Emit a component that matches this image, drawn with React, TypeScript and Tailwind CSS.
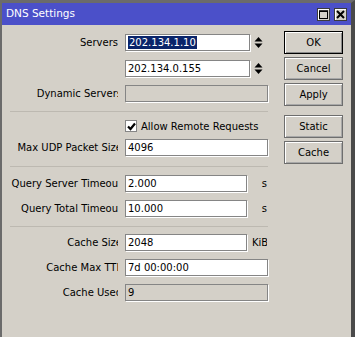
import React from "react";

function Label({ text, clip = true }: { text: string; clip?: boolean }) {
  return (
    <div className="w-[108px] shrink-0 overflow-hidden h-[17px] flex items-center">
      <div className={`${clip ? "w-[112px]" : "w-[108px]"} shrink-0 text-right whitespace-nowrap`}>
        {text}
      </div>
    </div>
  );
}

function Box({
  children,
  className = "",
  disabled = false,
}: {
  children?: React.ReactNode;
  className?: string;
  disabled?: boolean;
}) {
  return (
    <div
      className={`h-[17px] border border-[#858585] shadow-[1px_1px_0_#ffffff] flex items-center pl-[2px] whitespace-nowrap overflow-hidden ${
        disabled ? "bg-[#d4d0c8]" : "bg-white"
      } ${className}`}
    >
      {children}
    </div>
  );
}

function Spinner() {
  return (
    <svg width="9" height="13" viewBox="0 0 9 13" className="ml-[4px] shrink-0">
      <path d="M4.5 1 L8.5 5.5 L0.5 5.5 Z" fill="#000" />
      <path d="M0.5 7.5 L8.5 7.5 L4.5 12 Z" fill="#000" />
    </svg>
  );
}

function Unit({ text }: { text: string }) {
  return (
    <div className="w-[15px] ml-[5px] overflow-hidden shrink-0">
      <div className="w-[15px] text-right whitespace-nowrap">{text}</div>
    </div>
  );
}

function Row({ label, className = "", clip = true, children }: { label: string; className?: string; clip?: boolean; children: React.ReactNode }) {
  return (
    <div className={`flex items-center h-[17px] gap-[7px] ${className}`}>
      {label ? <Label text={label} clip={clip} /> : <div className="w-[108px] shrink-0" />}
      <div className="flex items-center w-[143px]">{children}</div>
    </div>
  );
}

function Sep({ className = "" }: { className?: string }) {
  return <div className={`h-px w-[258px] bg-[#bdb9b1] ${className}`} />;
}

function Btn({ text, def = false, className = "" }: { text: string; def?: boolean; className?: string }) {
  return (
    <div
      className={`w-[59px] h-[23px] flex items-center justify-center border ${
        def ? "border-black shadow-[inset_1px_1px_0_#ffffff,inset_-1px_-1px_0_#8a8a8a]" : "border-[#6e6e6e] shadow-[inset_1px_1px_0_#ffffff,inset_-1px_-1px_0_#a8a8a8]"
      } ${className}`}
    >
      {text}
    </div>
  );
}

function TitleBtn({ children }: { children: React.ReactNode }) {
  return (
    <div className="w-[13px] h-[13px] bg-[#d4d0c8] border border-[#3c3c3c] shadow-[inset_1px_1px_0_#ffffff] flex items-center justify-center">
      {children}
    </div>
  );
}

export default function App() {
  return (
    <div className="w-[355px] h-[337px] flex flex-col border-l-2 border-t-[3px] border-r-4 border-l-[#6b6b6b] border-t-[#6b6b6b] border-r-[#4a4a4a] font-['DejaVu_Sans',sans-serif] text-[10px] text-black overflow-hidden">
      <div className="h-[22px] shrink-0 bg-[#4b50c9] flex items-center pl-[4px] pr-[4px]">
        <span className="text-white text-[10.5px] flex-1">DNS Settings</span>
        <div className="flex gap-[4px] mt-[1px]">
          <TitleBtn>
            <svg width="9" height="9" viewBox="0 0 9 9">
              <rect x="0.5" y="1" width="8" height="7.5" fill="none" stroke="#000" strokeWidth="1" />
              <rect x="0" y="0.5" width="9" height="1.5" fill="#000" />
            </svg>
          </TitleBtn>
          <TitleBtn>
            <svg width="9" height="9" viewBox="0 0 9 9">
              <path d="M1 1 L8 8 M8 1 L1 8" stroke="#000" strokeWidth="2" />
            </svg>
          </TitleBtn>
        </div>
      </div>
      <div className="flex-1 bg-[#d4d0c8] flex pl-[8px]">
        <div className="flex flex-col w-[258px]">
          <Row label="Servers" clip={false} className="mt-[9px]">
            <Box className="w-[125px]">
              <span className="bg-[#0a246a] text-white leading-[13px] px-px">202.134.1.10</span>
            </Box>
            <Spinner />
          </Row>
          <Row label="" className="mt-[9px]">
            <Box className="w-[125px]">202.134.0.155</Box>
            <Spinner />
          </Row>
          <Row label="Dynamic Servers" className="mt-[8px]">
            <Box className="w-[143px]" disabled />
          </Row>
          <Sep className="mt-[9px]" />
          <div className="flex items-center h-[12px] mt-[8px] gap-[7px]">
            <div className="w-[108px] shrink-0" />
            <div className="w-[12px] h-[12px] bg-white border border-[#858585] flex items-center justify-center">
              <svg width="9" height="9" viewBox="0 0 9 9">
                <path d="M1 4.5 L3.5 7 L8 1.5" fill="none" stroke="#000" strokeWidth="2.2" />
              </svg>
            </div>
            <span className="ml-[-3px] whitespace-nowrap">Allow Remote Requests</span>
          </div>
          <Row label="Max UDP Packet Size" className="mt-[7px]">
            <Box className="w-[143px]">4096</Box>
          </Row>
          <Sep className="mt-[10px]" />
          <Row label="Query Server Timeout" className="mt-[8px]">
            <Box className="w-[122px]">2.000</Box>
            <Unit text="s" />
          </Row>
          <Row label="Query Total Timeout" className="mt-[8px]">
            <Box className="w-[122px]">10.000</Box>
            <Unit text="s" />
          </Row>
          <Sep className="mt-[9px]" />
          <Row label="Cache Size" className="mt-[7px]">
            <Box className="w-[122px]">2048</Box>
            <Unit text="KiB" />
          </Row>
          <Row label="Cache Max TTL" className="mt-[8px]">
            <Box className="w-[143px]">7d 00:00:00</Box>
          </Row>
          <Row label="Cache Used" className="mt-[8px]">
            <Box className="w-[143px]" disabled>
              9
            </Box>
          </Row>
        </div>
        <div className="flex flex-col ml-[16px] mt-[6px]">
          <Btn text="OK" def />
          <Btn text="Cancel" className="mt-[3px]" />
          <Btn text="Apply" className="mt-[3px]" />
          <Btn text="Static" className="mt-[9px]" />
          <Btn text="Cache" className="mt-[3px]" />
        </div>
      </div>
    </div>
  );
}
